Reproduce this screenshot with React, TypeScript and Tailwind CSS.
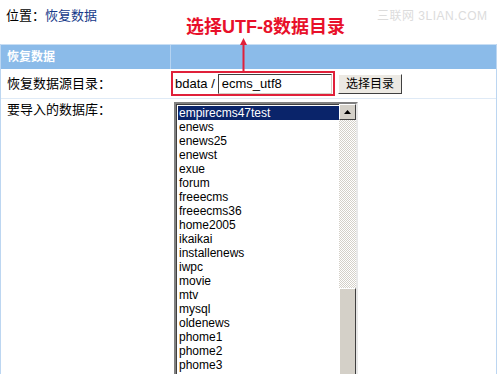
const dbs = [
  "empirecms47test",
  "enews",
  "enews25",
  "enewst",
  "exue",
  "forum",
  "freeecms",
  "freeecms36",
  "home2005",
  "ikaikai",
  "installenews",
  "iwpc",
  "movie",
  "mtv",
  "mysql",
  "oldenews",
  "phome1",
  "phome2",
  "phome3",
  "phome4",
];

const cjk = "font-['Liberation_Sans','Noto_Sans_CJK_SC',sans-serif]";

function Scrollbar() {
  return (
    <div className="flex w-[17px] flex-col bg-[#e6e4dc]">
      <div className="flex h-[16px] items-center justify-center border border-t-white border-l-white border-r-[#404040] border-b-[#404040] bg-[#d4d0c8]">
        <svg width="7" height="4" viewBox="0 0 7 4">
          <path d="M3.5 0 L7 4 L0 4 Z" fill="#000" />
        </svg>
      </div>
      <div className="flex-1 bg-[repeating-conic-gradient(#d4d0c8_0%_25%,#fff_0%_50%)] bg-[length:2px_2px]" />
      <div className="h-[112px] border border-t-white border-l-white border-r-[#404040] border-b-[#404040] bg-[#d4d0c8]" />
    </div>
  );
}

export default function App() {
  return (
    <div className={`relative h-[374px] w-[500px] overflow-hidden bg-white text-[12px] text-black ${cjk}`}>
      <div className="flex h-[44px] items-start pl-[6px] pt-[6px] text-[13px]">
        <span>位置：</span>
        <span className="text-[#163a8a]">恢复数据</span>
      </div>

      <div className="w-[497px] border-l border-r border-[#bcd6f1]">
        <div className="flex h-[25px] border-t border-[#c8def4] bg-[#8bbbe9]">
          <div className="flex w-[170px] items-center border-r border-[#b5d3f1] pl-[6px] text-[12px] font-bold text-white">
            恢复数据
          </div>
          <div className="flex-1" />
        </div>

        <div className="flex h-[30px] border-b border-[#dfeaf6]">
          <div className="flex w-[170px] items-center pl-[6px] text-[13px]">
            恢复数据源目录：
          </div>
          <div className="flex items-center">
            <div className="flex h-[25px] w-[164px] items-center border-2 border-[#e0203a] pl-[2px]">
              <span className="text-[13px]">bdata /</span>
              <div className="ml-[3px] flex h-[20px] w-[114px] items-center border border-t-[#404040] border-l-[#404040] border-r-[#d4d0c8] border-b-[#d4d0c8] bg-white pl-[3px] text-[13px]">
                ecms_utf8
              </div>
            </div>
            <div className="ml-[3px] flex h-[20px] w-[64px] items-center justify-center border border-t-white border-l-white border-r-[#404040] border-b-[#404040] bg-[#ece9e3] text-[12px]">
              选择目录
            </div>
          </div>
        </div>

        <div className="flex h-[300px]">
          <div className="w-[173px] pl-[6px] pt-[1px] text-[13px]">要导入的数据库：</div>
          <div className="pt-[3px]">
            <div className="flex h-[300px] w-[184px] border-2 border-t-[#808080] border-l-[#808080] border-r-[#e8e8e8] border-b-[#e8e8e8]">
              <div className="flex flex-1 flex-col border-l border-t border-[#404040] pl-[1px] pt-[1px]">
                {dbs.map((d, i) => (
                  <div
                    key={d}
                    className={`h-[14px] pl-[1px] text-[12px] leading-[14px] ${
                      i === 0 ? "bg-[#0a246a] text-white" : ""
                    }`}
                  >
                    {d}
                  </div>
                ))}
              </div>
              <Scrollbar />
            </div>
          </div>
        </div>
      </div>

      <div className="absolute left-[377px] top-[7px] text-[12px] tracking-[0.5px] text-[#dcdcdc]">
        三联网 3LIAN.COM
      </div>

      <div className="absolute left-[186px] top-[15px] text-[18px] font-bold leading-[24px] text-[#e8102a]">
        选择UTF-8数据目录
      </div>
      <svg className="absolute left-[239px] top-[38px]" width="9" height="34" viewBox="0 0 9 34">
        <path d="M4.5 0 L8 7 L1 7 Z" fill="#e0203a" />
        <rect x="3.5" y="6" width="2" height="28" fill="#e0203a" />
      </svg>
    </div>
  );
}
